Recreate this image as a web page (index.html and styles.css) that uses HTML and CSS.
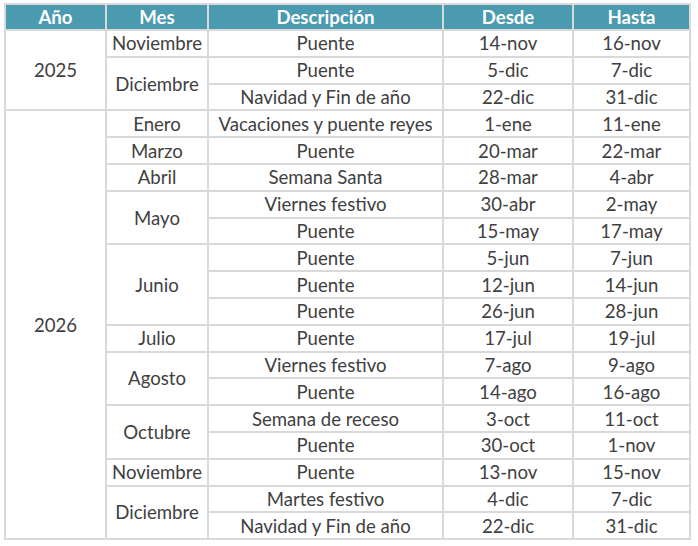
FILE: index.html
```html
<!DOCTYPE html>
<html lang="es">
<head>
<meta charset="utf-8">
<link rel="stylesheet" href="styles.css">
</head>
<body>
<table class="cal">
  <colgroup>
    <col class="c-ano"><col class="c-mes"><col class="c-desc"><col class="c-desde"><col class="c-hasta">
  </colgroup>
  <thead>
    <tr><th>Año</th><th>Mes</th><th>Descripción</th><th>Desde</th><th>Hasta</th></tr>
  </thead>
  <tbody>
    <tr><td rowspan="3">2025</td><td>Noviembre</td><td>Puente</td><td>14-nov</td><td>16-nov</td></tr>
    <tr><td rowspan="2">Diciembre</td><td>Puente</td><td>5-dic</td><td>7-dic</td></tr>
    <tr><td>Navidad y Fin de año</td><td>22-dic</td><td>31-dic</td></tr>
    <tr><td rowspan="16">2026</td><td>Enero</td><td>Vacaciones y puente reyes</td><td>1-ene</td><td>11-ene</td></tr>
    <tr><td>Marzo</td><td>Puente</td><td>20-mar</td><td>22-mar</td></tr>
    <tr><td>Abril</td><td>Semana Santa</td><td>28-mar</td><td>4-abr</td></tr>
    <tr><td rowspan="2">Mayo</td><td>Viernes festivo</td><td>30-abr</td><td>2-may</td></tr>
    <tr><td>Puente</td><td>15-may</td><td>17-may</td></tr>
    <tr><td rowspan="3">Junio</td><td>Puente</td><td>5-jun</td><td>7-jun</td></tr>
    <tr><td>Puente</td><td>12-jun</td><td>14-jun</td></tr>
    <tr><td>Puente</td><td>26-jun</td><td>28-jun</td></tr>
    <tr><td>Julio</td><td>Puente</td><td>17-jul</td><td>19-jul</td></tr>
    <tr><td rowspan="2">Agosto</td><td>Viernes festivo</td><td>7-ago</td><td>9-ago</td></tr>
    <tr><td>Puente</td><td>14-ago</td><td>16-ago</td></tr>
    <tr><td rowspan="2">Octubre</td><td>Semana de receso</td><td>3-oct</td><td>11-oct</td></tr>
    <tr><td>Puente</td><td>30-oct</td><td>1-nov</td></tr>
    <tr><td>Noviembre</td><td>Puente</td><td>13-nov</td><td>15-nov</td></tr>
    <tr><td rowspan="2">Diciembre</td><td>Martes festivo</td><td>4-dic</td><td>7-dic</td></tr>
    <tr><td>Navidad y Fin de año</td><td>22-dic</td><td>31-dic</td></tr>
  </tbody>
</table>
</body>
</html>
```
FILE: styles.css
```css
html, body {
  margin: 0;
  padding: 0;
  background: #ffffff;
}
body {
  padding: 3px 0 0 4px;
  font-family: Lato, "Liberation Sans", sans-serif;
}
.cal {
  border-collapse: collapse;
  table-layout: fixed;
  width: 685px;
  color: #404040;
  font-size: 18.6px;
}
.c-ano { width: 101px; }
.c-mes { width: 102px; }
.c-desc { width: 235px; }
.c-desde { width: 130px; }
.c-hasta { width: 117px; }
.cal th, .cal td {
  border: 2px solid #d9d9d9;
  text-align: center;
  vertical-align: middle;
  padding: 0;
  line-height: 20px;
}
.cal th {
  background: #4a9ab0;
  color: #ffffff;
  font-weight: 700;
  height: 24px;
}
.cal td {
  height: 24.8px;
}
```
